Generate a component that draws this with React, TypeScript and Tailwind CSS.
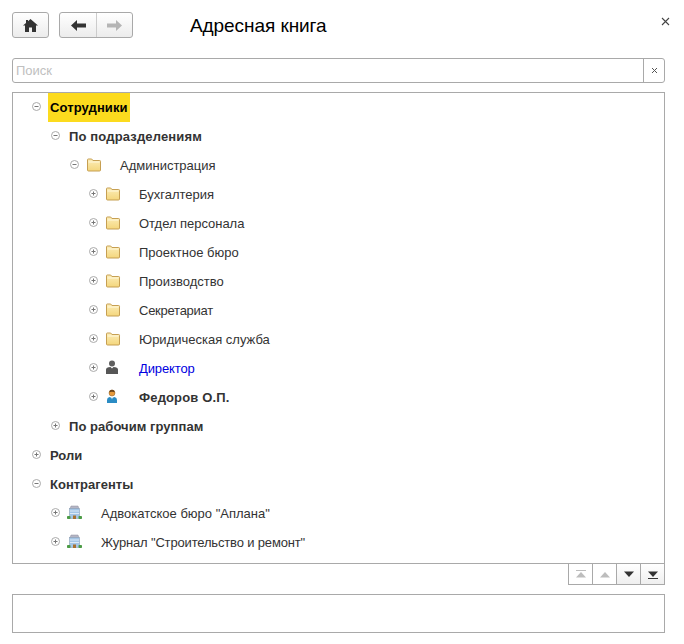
import React from "react";

type Kind = "folder" | "dark" | "person" | "org";

function Toggle({ open }: { open: boolean }) {
  return (
    <svg width="11" height="11" viewBox="0 0 11 11" className="mb-[2px] shrink-0">
      <circle cx="5.5" cy="5.5" r="4" fill="#fff" stroke="#aaaaaa" />
      <path d="M3.5 5.5h4" stroke="#777" />
      {!open && <path d="M5.5 3.5v4" stroke="#777" />}
    </svg>
  );
}

function Folder() {
  return (
    <svg width="16" height="14" viewBox="0 0 16 14" className="mb-[2px] shrink-0">
      <defs>
        <linearGradient id="fg" x1="0" y1="0" x2="0" y2="1">
          <stop offset="0" stopColor="#fcedb8" />
          <stop offset="1" stopColor="#f4d67c" />
        </linearGradient>
      </defs>
      <path d="M1.5 3V1.800q0-.8.8-.8h3.400l1.200 1.500h6.800q.8 0 .8.800V12q0 1-1 1H2.500q-1 0-1-1z" fill="url(#fg)" stroke="#c69f52" />
      <path d="M2.500 4h11" stroke="#fff8dc" />
    </svg>
  );
}

function Dark() {
  return (
    <svg width="14" height="15" viewBox="0 0 14 15" className="mb-[2px] shrink-0">
      <circle cx="7" cy="3.400" r="3" fill="#5f5f5f" />
      <path d="M1 14V9.500Q1 7.500 3.500 7.200L5.500 7 7 8.500 8.500 7l2 .2Q13 7.500 13 9.500V14z" fill="#565656" />
    </svg>
  );
}

function Person() {
  return (
    <svg width="14" height="15" viewBox="0 0 14 15" className="mb-[2px] shrink-0">
      <circle cx="7" cy="4" r="3" fill="#e79a3c" stroke="#8a5a20" strokeWidth=".5" />
      <path d="M4.200 3.200Q4.700 .8 7 .8t2.800 2.400Q7 2.500 4.200 3.200z" fill="#6b431a" />
      <path d="M2 14v-3q0-2.400 2.500-3L7 9l2.500-1q2.500 .6 2.500 3v3z" fill="#2b8cc4" />
      <path d="M6.200 8.300h1.600L7 10.500z" fill="#e8f4fb" />
    </svg>
  );
}

function Org() {
  return (
    <svg width="15" height="15" viewBox="0 0 15 15" className="mb-[2px] shrink-0">
      <path d="M4 1h7l1 2.500H3z" fill="#b5b5c4" stroke="#8f8f9f" strokeWidth=".5" />
      <rect x="2.500" y="3.500" width="10" height="10" fill="#a3c5e6" stroke="#8296ad" strokeWidth=".5" />
      <path d="M3 6h9M3 8.500h9" stroke="#dbe9f7" />
      <rect x="6" y="10.500" width="3" height="3.500" fill="#a8702f" />
      <rect x="0" y="11" width="3.500" height="3" rx=".8" fill="#4c9c46" />
      <rect x="11.500" y="11" width="3.500" height="3" rx=".8" fill="#4c9c46" />
    </svg>
  );
}

const icons: Record<Kind, React.ReactNode> = {
  folder: <Folder />,
  dark: <Dark />,
  person: <Person />,
  org: <Org />,
};

const indent = ["pl-[18px]", "pl-[37px]", "pl-[56px]", "pl-[75px]"];

function Row({
  level,
  open = false,
  label,
  bold = false,
  icon,
  color = "text-[#333333]",
  selected = false,
  spacing = "",
}: {
  level: number;
  open?: boolean;
  label: string;
  bold?: boolean;
  icon?: Kind;
  color?: string;
  selected?: boolean;
  spacing?: string;
}) {
  return (
    <div className={`flex h-[29px] items-center ${indent[level]}`}>
      <Toggle open={open} />
      <div className="ml-[1px] flex h-full items-center">
        {icon ? <div className="ml-[5px] flex w-[34px] items-center">{icons[icon]}</div> : null}
        <span
          className={`flex h-full items-center whitespace-nowrap text-[13px] ${bold ? "font-bold" : ""} ${color} ${spacing} ${
            selected ? "ml-[5px] bg-[#fcdb1e] px-[2px] text-black" : icon ? "" : "ml-[7px]"
          }`}
        >
          {label}
        </span>
      </div>
    </div>
  );
}

function Tri({ up, bar, dark }: { up: boolean; bar: boolean; dark: boolean }) {
  const c = dark ? "#333333" : "#bdbdbd";
  return (
    <svg width="12" height="9" viewBox="0 0 12 9">
      {up ? (
        <>
          {bar && <rect x="1" y="0" width="10" height="1" fill={c} />}
          <path d="M6 2L11 7.500H1z" fill={c} />
        </>
      ) : (
        <>
          <path d="M1 1.500H11L6 7z" fill={c} />
          {bar && <rect x="1" y="8" width="10" height="1" fill={c} />}
        </>
      )}
    </svg>
  );
}

export default function App() {
  return (
    <div
      className="flex h-[644px] w-[684px] flex-col bg-white px-[12px] pr-[19px] pt-[12px]"
      style={{ fontFamily: '"Liberation Sans", Arial, sans-serif' }}
    >
      <div className="relative flex h-[26px] items-center">
        <button className="flex h-[26px] w-[37px] items-center justify-center rounded-[3px] border border-[#a9a9a9] bg-gradient-to-b from-white to-[#ececec]">
          <svg width="15" height="13" viewBox="0 0 15 13">
            <path d="M7.500 0L15 6.500h-2V13H9V8.500H6V13H2V6.500H0L3 4V1h2v1.300z" fill="#333" />
          </svg>
        </button>
        <div className="ml-[10px] flex h-[26px] w-[74px] rounded-[3px] border border-[#a9a9a9] bg-gradient-to-b from-white to-[#ececec]">
          <div className="flex w-[37px] items-center justify-center border-r border-[#cccccc]">
            <svg width="15" height="11" viewBox="0 0 15 11">
              <path d="M0 5.500L6 0v3.500h9v4H6V11z" fill="#333" />
            </svg>
          </div>
          <div className="flex flex-1 items-center justify-center">
            <svg width="15" height="11" viewBox="0 0 15 11">
              <path d="M15 5.500L9 0v3.500H0v4h9V11z" fill="#b5b5b5" />
            </svg>
          </div>
        </div>
        <h1 className="ml-[57px] text-[19px] leading-none tracking-[-0.07px] text-black">Адресная книга</h1>
        <svg width="9" height="9" viewBox="0 0 9 9" className="absolute right-[-5px] top-[5px]">
          <path d="M1 1l7 7M8 1L1 8" stroke="#444" strokeWidth="1.100" />
        </svg>
      </div>

      <div className="mt-[20px] flex h-[25px] items-stretch rounded-[3px] border border-[#a9a9a9]">
        <div className="flex flex-1 items-center pl-[3px] text-[13px] text-[#c0c0c0]">Поиск</div>
        <div className="flex w-[21px] items-center justify-center border-l border-[#a9a9a9]">
          <svg width="7" height="7" viewBox="0 0 7 7">
            <path d="M1 1l5 5M6 1L1 6" stroke="#555" />
          </svg>
        </div>
      </div>

      <div className="mt-[9px] h-[472px] border border-[#a9a9a9]">
        <Row level={0} open bold selected label="Сотрудники" spacing="tracking-[0.1px]" />
        <Row level={1} open bold label="По подразделениям" spacing="tracking-[0.15px]" />
        <Row level={2} open icon="folder" label="Администрация" />
        <Row level={3} icon="folder" label="Бухгалтерия" />
        <Row level={3} icon="folder" label="Отдел персонала" spacing="tracking-[-0.03px]" />
        <Row level={3} icon="folder" label="Проектное бюро" />
        <Row level={3} icon="folder" label="Производство" />
        <Row level={3} icon="folder" label="Секретариат" spacing="tracking-[-0.25px]" />
        <Row level={3} icon="folder" label="Юридическая служба" />
        <Row level={3} icon="dark" label="Директор" color="text-[#0000e0]" spacing="tracking-[-0.12px]" />
        <Row level={3} icon="person" bold label="Федоров О.П." spacing="tracking-[0.15px]" />
        <Row level={1} bold label="По рабочим группам" spacing="tracking-[0.05px]" />
        <Row level={0} bold label="Роли" />
        <Row level={0} open bold label="Контрагенты" />
        <Row level={1} icon="org" label={'Адвокатское бюро "Аплана"'} />
        <Row level={1} icon="org" label={'Журнал "Строительство и ремонт"'} spacing="tracking-[-0.16px]" />
      </div>

      <div className="flex justify-end">
        <div className="flex h-[21px] w-[97px] border-x border-b border-[#a9a9a9]">
          <div className="flex flex-1 items-center justify-center border-r border-[#a9a9a9]">
            <Tri up bar dark={false} />
          </div>
          <div className="flex flex-1 items-center justify-center border-r border-[#a9a9a9]">
            <Tri up bar={false} dark={false} />
          </div>
          <div className="flex flex-1 items-center justify-center border-r border-[#a9a9a9] bg-gradient-to-b from-white to-[#efefef]">
            <Tri up={false} bar={false} dark />
          </div>
          <div className="flex flex-1 items-center justify-center bg-gradient-to-b from-white to-[#efefef]">
            <Tri up={false} bar dark />
          </div>
        </div>
      </div>

      <div className="mt-[9px] h-[39px] border border-[#a9a9a9]" />
    </div>
  );
}
